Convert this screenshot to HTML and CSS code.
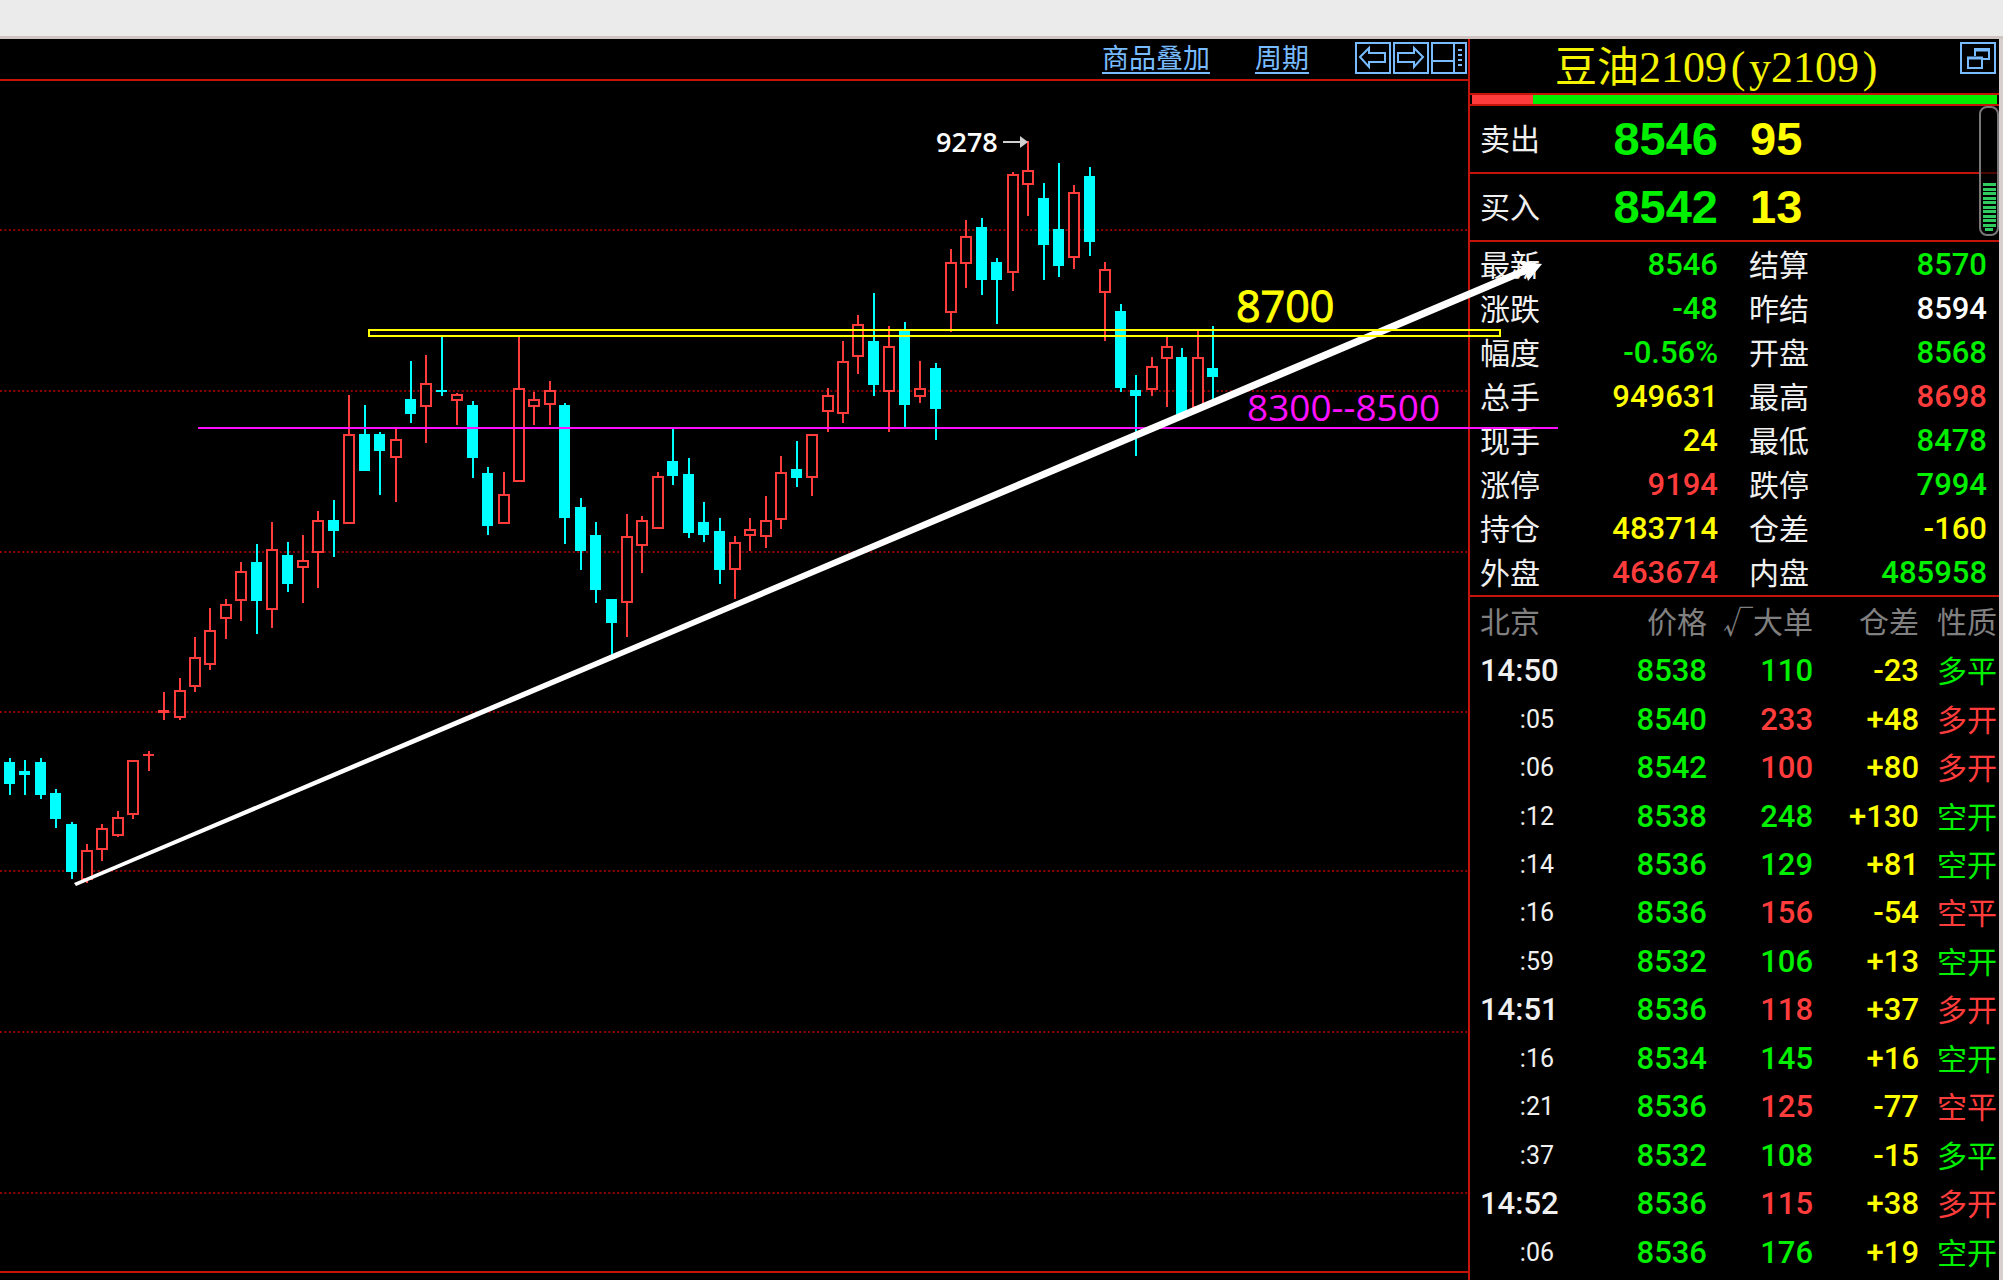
FILE: index.html
```html
<!DOCTYPE html>
<html lang="zh-CN">
<head>
<meta charset="utf-8">
<title>豆油2109(y2109)</title>
<link rel="stylesheet" href="styles.css">
</head>
<body>
<div class="frame-top"></div>
<main class="terminal">
  <section class="chart">
    <nav class="toolbar">
      <a class="toolbar-link" href="#overlay">商品叠加</a>
      <a class="toolbar-link" href="#period">周期</a>
      <div class="toolbar-buttons">
        <button class="icon-button" type="button" aria-label="向左">
          <svg viewBox="0 0 32 28"><path d="M3 13 L12 4 V9 H28 V18 H12 V23 Z"/></svg>
        </button>
        <button class="icon-button" type="button" aria-label="向右">
          <svg viewBox="0 0 32 28"><path d="M28 13 L19 4 V9 H3 V18 H19 V23 Z"/></svg>
        </button>
        <button class="icon-button" type="button" aria-label="布局">
          <svg viewBox="0 0 32 28"><path d="M0 17 H21 M21 0 V28"/><path stroke-dasharray="2 3" stroke-width="4" d="M27 5 V23"/></svg>
        </button>
      </div>
    </nav>
    <svg class="plot" viewBox="0 81 1468 1190" preserveAspectRatio="xMinYMin meet">
      <path class="grid-line" d="M0 230H1468M0 391H1468M0 552H1468M0 712H1468M0 871H1468M0 1032H1468M0 1193H1468"/>
      <g id="candles" shape-rendering="crispEdges"></g>
      <text class="peak-label" x="936" y="152">9278</text>
      <path class="peak-arrow" d="M1003 142H1021"/>
      <path class="peak-head" d="M1020 136L1028 142L1020 148Z"/>
      <path class="support" d="M198 428H1558"/>
      <path class="trend" d="M74 883L1080 455L1524 267L1517 261L1542 264L1528 281L1526 274L1082 462L76 886Z"/>
      <rect class="resistance" x="369" y="330" width="1131" height="6"/>
      <text class="resistance-label" x="1236" y="322">8700</text>
      <text class="support-label" x="1247" y="421">8300--8500</text>
    </svg>
  </section>

  <aside class="side">
    <header class="side-head">
      <h1 class="side-title"><span class="side-name">豆油</span>2109<span class="paren">(</span>y2109<span class="paren">)</span></h1>
      <button class="icon-button" type="button" aria-label="还原窗口">
        <svg viewBox="0 0 32 28"><path d="M13 12V5H27V15H20"/><path d="M12 6H28M5 14H21" stroke-width="3"/><rect x="6" y="14" width="14" height="10"/></svg>
      </button>
    </header>
    <div class="ratio"><div class="ratio-sell"></div></div>

    <div class="book">
      <div class="book-row"><span class="label">卖出</span><span class="book-price">8546</span><span class="book-size">95</span></div>
      <div class="book-row"><span class="label">买入</span><span class="book-price">8542</span><span class="book-size">13</span></div>
      <div class="gauge"><i></i><i></i><i></i><i></i><i></i><i></i><i></i><i></i><i></i><i></i><i></i></div>
    </div>

    <dl class="quotes">
      <dt>最新</dt><dd class="down">8546</dd><dt>结算</dt><dd class="down">8570</dd>
      <dt>涨跌</dt><dd class="down">-48</dd><dt>昨结</dt><dd class="flat">8594</dd>
      <dt>幅度</dt><dd class="down">-0.56%</dd><dt>开盘</dt><dd class="down">8568</dd>
      <dt>总手</dt><dd class="count">949631</dd><dt>最高</dt><dd class="up">8698</dd>
      <dt>现手</dt><dd class="count">24</dd><dt>最低</dt><dd class="down">8478</dd>
      <dt>涨停</dt><dd class="up">9194</dd><dt>跌停</dt><dd class="down">7994</dd>
      <dt>持仓</dt><dd class="count">483714</dd><dt>仓差</dt><dd class="count">-160</dd>
      <dt>外盘</dt><dd class="up">463674</dd><dt>内盘</dt><dd class="down">485958</dd>
    </dl>

    <table class="ticks">
      <colgroup><col class="col-time"><col class="col-price"><col class="col-size"><col class="col-size"><col></colgroup>
      <thead><tr><th class="time">北京</th><th>价格</th><th>√大单</th><th>仓差</th><th class="kind">性质</th></tr></thead>
      <tbody>
        <tr><td class="time">14:50</td><td class="down">8538</td><td class="down">110</td><td class="count">-23</td><td class="kind down">多平</td></tr>
        <tr><td class="second">:05</td><td class="down">8540</td><td class="up">233</td><td class="count">+48</td><td class="kind up">多开</td></tr>
        <tr><td class="second">:06</td><td class="down">8542</td><td class="up">100</td><td class="count">+80</td><td class="kind up">多开</td></tr>
        <tr><td class="second">:12</td><td class="down">8538</td><td class="down">248</td><td class="count">+130</td><td class="kind down">空开</td></tr>
        <tr><td class="second">:14</td><td class="down">8536</td><td class="down">129</td><td class="count">+81</td><td class="kind down">空开</td></tr>
        <tr><td class="second">:16</td><td class="down">8536</td><td class="up">156</td><td class="count">-54</td><td class="kind up">空平</td></tr>
        <tr><td class="second">:59</td><td class="down">8532</td><td class="down">106</td><td class="count">+13</td><td class="kind down">空开</td></tr>
        <tr><td class="time">14:51</td><td class="down">8536</td><td class="up">118</td><td class="count">+37</td><td class="kind up">多开</td></tr>
        <tr><td class="second">:16</td><td class="down">8534</td><td class="down">145</td><td class="count">+16</td><td class="kind down">空开</td></tr>
        <tr><td class="second">:21</td><td class="down">8536</td><td class="up">125</td><td class="count">-77</td><td class="kind up">空平</td></tr>
        <tr><td class="second">:37</td><td class="down">8532</td><td class="down">108</td><td class="count">-15</td><td class="kind down">多平</td></tr>
        <tr><td class="time">14:52</td><td class="down">8536</td><td class="up">115</td><td class="count">+38</td><td class="kind up">多开</td></tr>
        <tr><td class="second">:06</td><td class="down">8536</td><td class="down">176</td><td class="count">+19</td><td class="kind down">空开</td></tr>
      </tbody>
    </table>
  </aside>
</main>
<script src="chart.js"></script>
</body>
</html>
```
FILE: styles.css
```css
* { box-sizing: border-box; }

:root {
  --line: #c4140a;
  --up: #ff3c3c;
  --down: #00f000;
  --count: #ffff00;
  --sky: #78bcff;
  --cjk: "Noto Sans CJK SC", sans-serif;
}

body {
  margin: 0;
  min-height: 100vh;
  display: flex;
  flex-direction: column;
  background: #000;
  color: #f0f0f0;
  font-family: Roboto, "Noto Sans CJK SC", sans-serif;
}

.frame-top {
  height: 39px;
  background: #ebebeb;
  border-bottom: 3px solid #cfc6c4;
}

.terminal {
  flex: 1;
  display: flex;
  border-right: 4px solid #d8cfd0;
}

/* chart pane */
.chart {
  flex: 1;
  min-width: 0;
  display: flex;
  flex-direction: column;
}

.toolbar {
  height: 42px;
  display: flex;
  justify-content: flex-end;
  align-items: flex-start;
  padding: 3px 1px 0 0;
  border-bottom: 2px solid var(--line);
}

.toolbar-link {
  margin-right: 45px;
  border-bottom: 2px solid var(--sky);
  color: var(--sky);
  font: 400 27px/30px var(--cjk);
  text-decoration: none;
}

.toolbar-link + .toolbar-link { margin-right: 46px; }

.toolbar-buttons { display: flex; gap: 2px; }

.icon-button {
  width: 36px;
  height: 32px;
  padding: 0;
  border: 2px solid var(--sky);
  background: #000;
}

.icon-button svg {
  display: block;
  width: 32px;
  height: 28px;
  fill: none;
  stroke: var(--sky);
  stroke-width: 2;
}

.plot {
  display: block;
  width: 100%;
  position: relative;
  z-index: 1;
  overflow: visible;
  border-bottom: 2px solid var(--line);
  pointer-events: none;
}

.grid-line { stroke: #900000; stroke-width: 2; stroke-dasharray: 2 2.44; }
.rise { fill: #000; stroke: #ff3c3c; stroke-width: 2; }
.rise-wick { fill: #ff3c3c; }
.fall { fill: #00ffff; }
.peak-label { fill: #fff; font: 600 27px "Open Sans", sans-serif; }
.peak-arrow { stroke: #d0d0d0; stroke-width: 2; }
.peak-head { fill: #d0d0d0; }
.support { stroke: #ff10ff; stroke-width: 2; }
.support-label { fill: #ff10ff; font: 37px "Open Sans", sans-serif; }
.resistance { fill: none; stroke: #ffff00; stroke-width: 2; }
.resistance-label { fill: #ffff00; stroke: #ffff00; stroke-width: 1; font: 43px "Open Sans", sans-serif; }
.trend { fill: #fff; }

/* quote panel */
.side {
  flex: 0 0 531px;
  display: flex;
  flex-direction: column;
  border-left: 2px solid var(--line);
}

.side-head {
  height: 54px;
  display: flex;
  align-items: flex-start;
  padding: 3px 3px 0 0;
}

.side-title {
  flex: 1;
  margin: 0;
  padding-left: 6px;
  color: #f4f400;
  font: 400 44px/44px "Liberation Serif", serif;
  text-align: center;
}

.side-name { font-family: var(--cjk); font-size: 42px; line-height: 44px; }
.paren { display: inline-block; width: 22px; }

.ratio {
  height: 13px;
  padding-right: 2px;
  border: solid var(--line);
  border-width: 2px 0;
  background: var(--down) content-box;
}

.ratio-sell { width: 12%; height: 100%; background: var(--up); border-left: 2px solid #000; }

.book { position: relative; }

.book-row {
  height: 68px;
  display: grid;
  grid-template-columns: 72px 166px 1fr;
  align-items: center;
  padding-left: 10px;
  border-bottom: 2px solid var(--line);
}

.label, .quotes dt, .ticks th, .ticks .kind { font: 400 30px/40px var(--cjk); }
.label, .quotes dt { padding-bottom: 4px; }

.book-price, .book-size { font: 700 47px/50px "Liberation Sans", sans-serif; }
.book-price { color: var(--down); text-align: right; }
.book-size { color: var(--count); padding-left: 32px; }

.gauge {
  position: absolute;
  top: 0;
  right: 0;
  width: 20px;
  height: 130px;
  display: flex;
  flex-direction: column;
  justify-content: space-between;
  align-items: center;
  padding: 75px 0 3px;
  border: 2px solid #777;
  border-radius: 8px;
  background: rgba(0, 0, 0, 0.6);
}

.gauge i { width: 13px; height: 3px; background: #30cc60; }
.gauge i:last-child { width: 8px; }

.quotes {
  height: 355px;
  margin: 0;
  padding: 1px 12px 0 10px;
  display: grid;
  grid-template-columns: 72px 166px 92px 1fr;
  grid-template-rows: repeat(8, 1fr);
  align-items: center;
  border-bottom: 2px solid var(--line);
}

.quotes dt:nth-of-type(even) { padding-left: 31px; }
.quotes dd { margin: 0; font: 500 31px/40px Roboto, sans-serif; text-align: right; }

.up { color: var(--up); }
.down { color: var(--down); }
.count { color: var(--count); }
.flat { color: #fff; }

.ticks {
  flex: 1;
  width: 100%;
  margin-bottom: 3px;
  table-layout: fixed;
  border-collapse: collapse;
}

.col-time { width: 90px; }
.col-price { width: 147px; }
.col-size { width: 106px; }

.ticks th, .ticks td { height: 48px; padding: 0; text-align: right; white-space: nowrap; }
.ticks th { height: 50px; padding-bottom: 4px; color: #808080; }
.ticks td { font: 500 31px/40px Roboto, sans-serif; }
.ticks .time { padding-left: 10px; text-align: left; }
.ticks td.second { padding-right: 6px; font-size: 25px; font-weight: 400; }
.ticks .kind { padding-right: 2px; }
.ticks td.kind { padding-bottom: 4px; }
```
FILE: chart.js
```js
// Each candle: [direction, wick top, body top, body bottom, wick bottom]
const candles = [
  ['d',758,762,784,795],['d',760,771,775,795],['d',758,762,795,799],['d',789,793,819,828],
  ['d',822,824,872,879],['u',844,850,880,883],['u',824,828,850,861],['u',811,817,836,837],
  ['u',760,760,815,819],['u',751,754,756,771],['u',692,710,713,720],['u',678,690,718,720],
  ['u',637,657,687,692],['u',608,630,665,670],['u',599,604,619,639],['u',562,571,601,621],
  ['d',544,562,601,634],['u',522,549,610,628],['d',542,555,584,592],['u',535,560,568,603],
  ['u',511,520,553,588],['d',500,520,531,557],['u',395,434,524,524],['d',405,434,471,471],
  ['d',432,434,451,495],['u',429,439,458,502],['d',361,399,414,423],['u',355,383,407,443],
  ['d',336,390,392,396],['u',393,394,401,425],['d',401,405,458,478],['d',467,473,526,535],
  ['u',472,494,524,524],['u',336,388,482,482],['u',392,399,407,425],['u',381,390,405,425],
  ['d',403,405,518,544],['d',498,507,551,570],['d',522,535,590,603],['d',599,599,623,655],
  ['u',514,536,603,637],['u',516,520,546,573],['u',472,476,529,529],['d',429,461,476,485],
  ['d',458,474,533,538],['d',502,522,535,542],['d',518,531,570,584],['u',536,542,570,599],
  ['u',518,529,536,551],['u',496,520,537,548],['u',456,472,520,529],['d',441,469,478,487],
  ['u',434,434,478,496],['u',388,395,412,432],['u',341,361,414,423],['u',315,324,357,374],
  ['d',293,341,385,396],['u',326,346,392,432],['d',322,330,405,428],['u',361,388,397,403],
  ['d',363,368,409,440],['u',249,262,313,332],['u',220,236,264,288],['d',218,227,280,295],
  ['d',258,262,280,324],['u',172,174,273,291],['u',141,170,185,216],['d',183,198,245,280],
  ['d',163,229,266,277],['u',185,192,258,269],['d',167,176,242,256],['u',262,269,293,341],
  ['d',304,311,388,392],['d',375,390,396,456],['u',357,366,390,396],['u',337,346,359,407],
  ['d',348,357,415,415],['u',330,357,408,408],['d',326,368,377,400]
];

const group = document.getElementById('candles');

function addRect(name, x, y, width, height) {
  const rect = document.createElementNS('http://www.w3.org/2000/svg', 'rect');
  rect.setAttribute('class', name);
  rect.setAttribute('x', x);
  rect.setAttribute('y', y);
  rect.setAttribute('width', width);
  rect.setAttribute('height', height);
  group.appendChild(rect);
}

candles.forEach(([direction, high, top, bottom, low], index) => {
  const x = Math.round(9.8 + index * 15.43);
  const rising = direction === 'u';
  addRect(rising ? 'rise-wick' : 'fall', x - 1, high, 2, low - high);
  if (rising && bottom - top > 4) {
    addRect('rise', x - 5, top + 1, 10, bottom - top - 2);
  } else {
    addRect(rising ? 'rise-wick' : 'fall', x - 6, top, 11, bottom - top);
  }
});
```
